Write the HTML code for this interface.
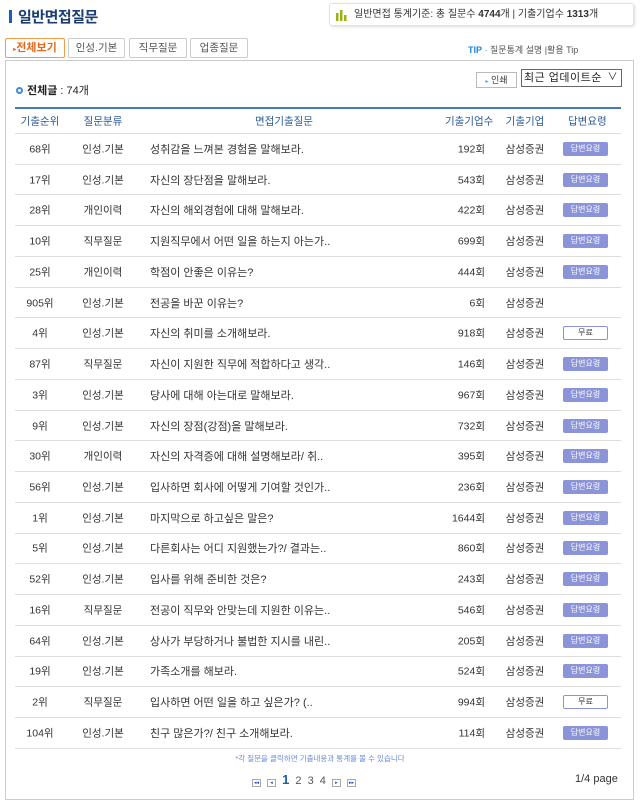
<!DOCTYPE html>
<html><head><meta charset="utf-8"><style>
*{margin:0;padding:0;box-sizing:border-box}
body{width:640px;height:803px;background:#fff;font-family:"Liberation Sans","Noto Sans CJK KR",sans-serif;font-size:11px;color:#333;position:relative;overflow:hidden}
.abs{position:absolute}
.title{left:9px;top:6px;font-size:15px;font-weight:bold;color:#1b3f73;letter-spacing:-0.5px}
.title:before{content:"";display:inline-block;width:3px;height:13px;background:#1b5fb0;margin-right:6px;vertical-align:-1px}
.stat{left:329px;top:3px;width:305px;height:23px;border:1px solid #e2e2e2;border-radius:3px;box-shadow:1px 1px 2px #ddd;font-size:10px;line-height:21px;padding-left:24px;color:#333}
.tab{top:38px;height:20px;border:1px solid #ccc;border-radius:2px;font-size:10.5px;line-height:18px;text-align:center;color:#555;background:#fff}
.box{left:5px;top:60px;width:629px;height:740px;border:1px solid #ccc}
.row{position:absolute;left:15px;width:606px;border-bottom:1px solid #ddd;font-size:10.5px}
.row span{position:absolute;top:50%;transform:translateY(-50%);white-space:nowrap}
.c1{left:0;width:50px;text-align:center}
.c2{left:60px;width:56px;text-align:center}
.c3{left:135px}
.c4{right:136px}
.c5{left:487px;width:46px;text-align:center}
.btn{left:548px;width:45px;height:14px;background:#8b93d9;color:#fff;font-size:8px;text-align:center;line-height:14px;border-radius:2px}
.free{left:548px;width:45px;height:14px;background:#fff;border:1px solid #8b93d9;color:#333;font-size:8px;text-align:center;line-height:12px;border-radius:2px}
.hd{color:#2a5a9a}
</style></head><body>
<div class="abs title">일반면접질문</div>
<div class="abs stat"><svg class="abs" style="left:6px;top:6px" width="11" height="11"><rect x="0" y="3" width="2.5" height="8" fill="#9ab11a"/><rect x="4" y="0" width="2.5" height="11" fill="#9ab11a"/><rect x="8" y="5" width="2.5" height="6" fill="#9ab11a"/></svg>일반면접 통계기준: 총 질문수 <b>4744</b>개 | 기출기업수 <b>1313</b>개</div>
<div class="abs tab" style="left:5px;width:60px;border-color:#f39a4a;color:#e8691a;font-weight:bold;font-size:11px"><span style="font-size:6px">▸</span>전체보기</div>
<div class="abs tab" style="left:68px;width:57px">인성.기본</div>
<div class="abs tab" style="left:129px;width:58px">직무질문</div>
<div class="abs tab" style="left:190px;width:58px">업종질문</div>
<div class="abs" style="left:468px;top:43px;font-size:9px;color:#555"><b style="color:#1e88d8">TIP</b> <span style="color:#1e88d8">·</span> 질문통계 설명 |활용 Tip</div>
<div class="abs box"></div>
<div class="abs" style="left:16px;top:82px;font-size:11px;color:#222"><span style="display:inline-block;width:7px;height:7px;border:2px solid #3a8ad8;border-radius:50%;margin-right:4px"></span><b>전체글</b> : 74개</div>
<div class="abs" style="left:476px;top:72px;width:41px;height:16px;border:1px solid #bbb;font-size:9px;line-height:14px;text-align:center;color:#333"><span style="color:#5a9ad8;font-size:6px">▸</span> 인쇄</div>
<div class="abs" style="left:521px;top:69px;width:101px;height:18px;border:1px solid #666;font-size:11px;line-height:16px;padding-left:2px;color:#222;letter-spacing:0.5px">최근 업데이트순 <span style="position:absolute;right:3px;font-size:10px">∨</span></div>
<div class="abs" style="left:15px;top:107px;width:606px;height:2px;background:#4a7ab5"></div>
<div class="row hd" style="top:109px;height:25px"><span class="c1">기출순위</span><span class="c2">질문분류</span><span style="left:240px">면접기출질문</span><span style="left:430px">기출기업수</span><span class="c5">기출기업</span><span style="left:553px">답변요령</span></div>
<div id="rows"></div>
<div class="abs" style="left:0;width:640px;top:753px;text-align:center;font-size:7.5px;color:#6a8ad8">*각 질문을 클릭하면 기출내용과 통계를 볼 수 있습니다</div>
<div class="abs" style="left:252px;top:772px;font-size:11px;color:#555;word-spacing:3px"><span style="display:inline-block;width:9px;height:8px;border:1px solid #aaa;font-size:5px;line-height:6px;text-align:center;color:#24c">◂◂</span> <span style="display:inline-block;width:9px;height:8px;border:1px solid #aaa;font-size:5px;line-height:6px;text-align:center;color:#24c">◂</span> <b style="color:#1e5fa8;font-size:13px">1</b> 2 3 4 <span style="display:inline-block;width:9px;height:8px;border:1px solid #aaa;font-size:5px;line-height:6px;text-align:center;color:#24c">▸</span> <span style="display:inline-block;width:9px;height:8px;border:1px solid #aaa;font-size:5px;line-height:6px;text-align:center;color:#24c">▸▸</span></div>
<div class="abs" style="left:575px;top:773px;font-size:11px;color:#333">1/4 page</div>
<script>
var d=[["68위","인성.기본","성취감을 느껴본 경험을 말해보라.","192회",1],["17위","인성.기본","자신의 장단점을 말해보라.","543회",1],["28위","개인이력","자신의 해외경험에 대해 말해보라.","422회",1],["10위","직무질문","지원직무에서 어떤 일을 하는지 아는가..","699회",1],["25위","개인이력","학점이 안좋은 이유는?","444회",1],["905위","인성.기본","전공을 바꾼 이유는?","6회",0],["4위","인성.기본","자신의 취미를 소개해보라.","918회",2],["87위","직무질문","자신이 지원한 직무에 적합하다고 생각..","146회",1],["3위","인성.기본","당사에 대해 아는대로 말해보라.","967회",1],["9위","인성.기본","자신의 장점(강점)을 말해보라.","732회",1],["30위","개인이력","자신의 자격증에 대해 설명해보라/ 취..","395회",1],["56위","인성.기본","입사하면 회사에 어떻게 기여할 것인가..","236회",1],["1위","인성.기본","마지막으로 하고싶은 말은?","1644회",1],["5위","인성.기본","다른회사는 어디 지원했는가?/ 결과는..","860회",1],["52위","인성.기본","입사를 위해 준비한 것은?","243회",1],["16위","직무질문","전공이 직무와 안맞는데 지원한 이유는..","546회",1],["64위","인성.기본","상사가 부당하거나 불법한 지시를 내린..","205회",1],["19위","인성.기본","가족소개를 해보라.","524회",1],["2위","직무질문","입사하면 어떤 일을 하고 싶은가? (..","994회",2],["104위","인성.기본","친구 많은가?/ 친구 소개해보라.","114회",1]];
var h="";for(var i=0;i<d.length;i++){var t=134+i*30.74,r=d[i];
h+='<div class="row" style="top:'+t+'px;height:30.74px"><span class="c1">'+r[0]+'</span><span class="c2">'+r[1]+'</span><span class="c3" style="font-size:11px">'+r[2]+'</span><span class="c4">'+r[3]+'</span><span class="c5">삼성증권</span>'+(r[4]==1?'<span class="btn">답변요령</span>':r[4]==2?'<span class="free">무료</span>':'')+'</div>';}
document.getElementById("rows").innerHTML=h;
</script>
</body></html>
